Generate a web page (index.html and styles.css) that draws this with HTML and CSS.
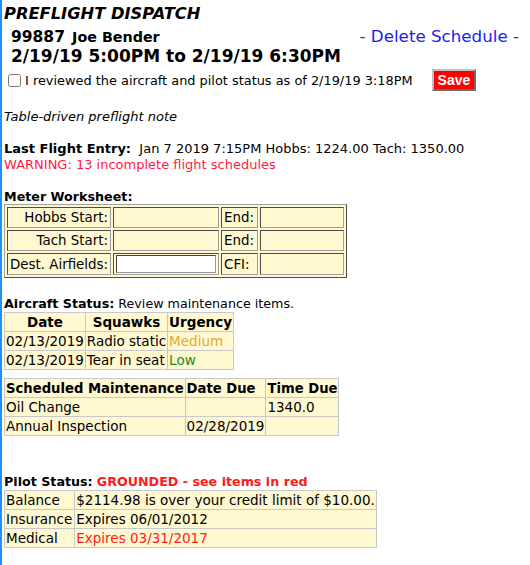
FILE: index.html
```html
<!DOCTYPE html>
<html>
<head>
<meta charset="utf-8">
<link rel="stylesheet" href="styles.css">
</head>
<body>
<div class="page">
  <div class="title">PREFLIGHT DISPATCH</div>
  <div class="head">
    <div class="who"><span class="tail">99887</span> <span class="name">Joe Bender</span></div>
    <a class="delete" href="#">- Delete Schedule -</a>
  </div>
  <div class="when">2/19/19 5:00PM to 2/19/19 6:30PM</div>
  <div class="review">
    <input type="checkbox" class="chk">
    <span class="review-text">I reviewed the aircraft and pilot status as of 2/19/19 3:18PM</span>
    <button class="save">Save</button>
  </div>
  <div class="note">Table-driven preflight note</div>

  <div class="last"><b>Last Flight Entry:</b>&nbsp; Jan 7 2019 7:15PM Hobbs: 1224.00 Tach: 1350.00</div>
  <div class="warn">WARNING: 13 incomplete flight schedules</div>

  <div class="section-label meter-label"><b>Meter Worksheet:</b></div>
  <table class="meter">
    <tr><td class="lbl">Hobbs Start:</td><td class="fld"></td><td class="lbl2">End:</td><td class="fld2"></td></tr>
    <tr><td class="lbl">Tach Start:</td><td class="fld"></td><td class="lbl2">End:</td><td class="fld2"></td></tr>
    <tr><td class="lbl">Dest. Airfields:</td><td class="fld"><input type="text" class="txt"></td><td class="lbl2">CFI:</td><td class="fld2"></td></tr>
  </table>

  <div class="section-label aircraft-label"><b>Aircraft Status:</b> Review maintenance items.</div>
  <table class="grid squawks">
    <tr><th>Date</th><th>Squawks</th><th>Urgency</th></tr>
    <tr><td>02/13/2019</td><td>Radio static</td><td class="medium">Medium</td></tr>
    <tr><td>02/13/2019</td><td>Tear in seat</td><td class="low">Low</td></tr>
  </table>

  <table class="grid maint">
    <tr><th>Scheduled Maintenance</th><th>Date Due</th><th>Time Due</th></tr>
    <tr><td>Oil Change</td><td></td><td>1340.0</td></tr>
    <tr><td>Annual Inspection</td><td>02/28/2019</td><td></td></tr>
  </table>

  <div class="section-label pilot-label"><b>Pilot Status:</b> <b class="grounded">GROUNDED - see items in red</b></div>
  <table class="grid pilot">
    <tr><td class="c1">Balance</td><td>$2114.98 is over your credit limit of $10.00.</td></tr>
    <tr><td class="c1">Insurance</td><td>Expires 06/01/2012</td></tr>
    <tr><td class="c1">Medical</td><td class="red">Expires 03/31/2017</td></tr>
  </table>
</div>
</body>
</html>
```
FILE: styles.css
```css
html, body {
  margin: 0;
  padding: 0;
  background: #fff;
}
body {
  font-family: "DejaVu Sans", Verdana, sans-serif;
  font-size: 13px;
  color: #000;
}
.page {
  border-left: 2px solid #1e90ff;
  min-height: 565px;
  box-sizing: border-box;
  padding: 4px 11px 0 2px;
}
.title {
  font-size: 16.3px;
  font-weight: bold;
  font-style: italic;
  line-height: 20px;
}
.head {
  display: flex;
  justify-content: space-between;
  align-items: baseline;
  padding-left: 7px;
  margin-top: 3px;
  height: 19px;
  line-height: 19px;
}
.tail {
  font-size: 15.5px;
  font-weight: bold;
}
.name {
  font-size: 14.3px;
  font-weight: bold;
  margin-left: 3px;
}
.delete {
  font-size: 16.7px;
  color: #2222ee;
  text-decoration: none;
}
.when {
  font-size: 17px;
  font-weight: bold;
  padding-left: 7px;
  line-height: 20px;
}
.review {
  display: flex;
  align-items: center;
  margin-top: 2px;
  padding-left: 3px;
  height: 24px;
}
.chk {
  width: 13px;
  height: 13px;
  margin: 0 4px 0 1px;
}
.review-text {
  font-size: 12.9px;
}
.save {
  margin-left: 19px;
  background: #ff0000;
  color: #fff;
  font-family: "Liberation Sans", Arial, sans-serif;
  font-weight: bold;
  font-size: 14px;
  border: 2px outset #c0c0c0;
  padding: 0 4px;
  width: 44px;
  height: 22px;
}
.note {
  font-style: italic;
  margin-top: 17px;
  line-height: 16px;
}
.last {
  margin-top: 16px;
  line-height: 16px;
}
.warn {
  color: #ff1a40;
  line-height: 16px;
}
.section-label {
  line-height: 16px;
  font-size: 12.7px;
}
.meter-label {
  margin-top: 17px;
  line-height: 14px;
}
.meter {
  background: #fff8d0;
  border: 1px outset #a0a0a0;
  border-spacing: 2px;
  margin-left: 0;
  font-size: 13.4px;
}
.meter td {
  border: 1px inset #a0a0a0;
  padding: 1px 2px;
  height: 17px;
  white-space: nowrap;
}
.meter .lbl { width: 97px; text-align: right; }
.meter .fld { width: 100px; padding: 1px 2px; }
.meter .lbl2 { width: 31px; }
.meter .fld2 { width: 78px; }
.txt {
  display: block;
  width: 100px;
  height: 18px;
  box-sizing: border-box;
  border: 1px inset #999;
  margin: 0;
  background: #fff;
}
.aircraft-label {
  margin-top: 18px;
}
.grid {
  border-collapse: collapse;
  background: #fff8d0;
  margin-left: 0;
  font-size: 13.5px;
}
.grid td, .grid th {
  border: 1px solid #c8c8c8;
  padding: 1px 1px;
  height: 16px;
  white-space: nowrap;
}
.grid th {
  font-weight: bold;
  text-align: center;
}
.maint {
  margin-top: 8px;
}
.maint th { text-align: left; font-size: 13.2px; }
.medium { color: #e0a83c; }
.low { color: #1e8a1e; }
.red { color: #ff2020; }
.pilot-label {
  margin-top: 38px;
}
.grounded { color: #ff1a1a; }
.pilot .c1 { padding-right: 2px; }
```
